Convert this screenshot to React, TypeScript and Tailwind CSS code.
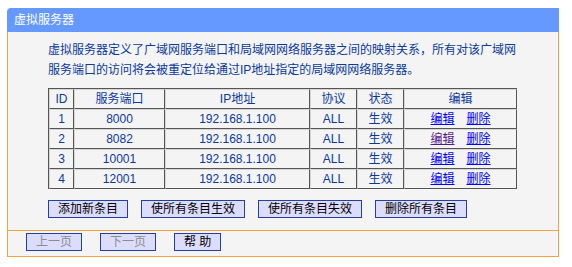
const rows = [
  { id: "1", port: "8000", visited: false },
  { id: "2", port: "8082", visited: true },
  { id: "3", port: "10001", visited: false },
  { id: "4", port: "12001", visited: false },
];

const cjk = "font-['Liberation_Sans','Noto_Sans_CJK_SC',sans-serif]";
const cell =
  "h-5 p-0 text-center align-middle border-l border-t border-r border-b border-l-[#d6d6d6] border-t-[#d6d6d6] border-r-[#555] border-b-[#555] text-[12px] leading-4 text-[#0b3a9a] font-normal";

function Btn({ label, disabled }: { label: string; disabled?: boolean }) {
  return (
    <button
      className={`h-[18px] px-[9px] border border-[#2240a0] bg-[#dcdcfc] text-[12px] leading-4 ${cjk} ${
        disabled ? "text-[#8c8c8c]" : "text-black"
      }`}
    >
      {label}
    </button>
  );
}

export default function App() {
  return (
    <div className={`w-[572px] h-[267px] bg-white pt-2 pl-[7px] ${cjk}`}>
      <div className="w-[552px]">
        {/* title bar */}
        <div className="h-6 bg-[#6699ff] rounded-tl-[4px] pl-[7px] flex items-center text-white text-[12px]">
          虚拟服务器
        </div>

        <div className="border-x border-b border-[#f7a040] bg-[#f4f4f4]">
          <div className="px-10 pt-2 pb-[12px]">
            <p className="w-[470px] text-[12px] leading-5 text-[#0b3a9a]">
              虚拟服务器定义了广域网服务端口和局域网网络服务器之间的映射关系，所有对该广域网服务端口的访问将会被重定位给通过IP地址指定的局域网网络服务器。
            </p>

            <table className="mt-2 w-[469px] table-fixed border-separate border-spacing-0 border-l border-t border-[#555]">
              <thead>
                <tr>
                  <th className={`${cell} w-[25px]`}>ID</th>
                  <th className={`${cell} w-[91px]`}>服务端口</th>
                  <th className={`${cell} w-[145px]`}>IP地址</th>
                  <th className={`${cell} w-[47px]`}>协议</th>
                  <th className={`${cell} w-[47px]`}>状态</th>
                  <th className={`${cell} w-[113px]`}>编辑</th>
                </tr>
              </thead>
              <tbody>
                {rows.map((r) => (
                  <tr key={r.id}>
                    <td className={cell}>{r.id}</td>
                    <td className={cell}>{r.port}</td>
                    <td className={cell}>192.168.1.100</td>
                    <td className={cell}>ALL</td>
                    <td className={cell}>生效</td>
                    <td className={cell}>
                      <span className="inline-flex gap-3">
                        <a className={`underline ${r.visited ? "text-[#551a8b]" : "text-[#0000ff]"}`}>编辑</a>
                        <a className="underline text-[#0000ff]">删除</a>
                      </span>
                    </td>
                  </tr>
                ))}
              </tbody>
            </table>

            <div className="mt-[11px] flex gap-[13px]">
              <Btn label="添加新条目" />
              <Btn label="使所有条目生效" />
              <Btn label="使所有条目失效" />
              <Btn label="删除所有条目" />
            </div>
          </div>

          <div className="border-t border-[#f7a040] h-[26px] pl-[18px] pt-[2px] flex gap-[18px]">
            <Btn label="上一页" disabled />
            <Btn label="下一页" disabled />
            <Btn label="帮 助" />
          </div>
        </div>
      </div>
    </div>
  );
}
